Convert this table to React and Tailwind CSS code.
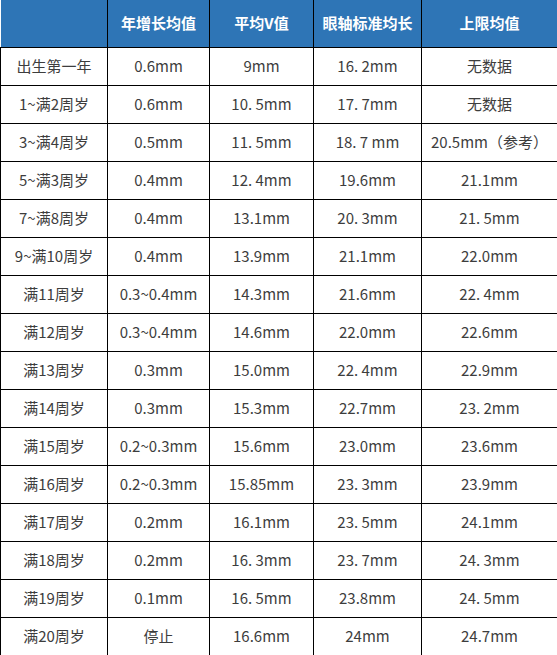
import React from "react";

const rows = [
  ["出生第一年", "0.6mm", "9mm", "16. 2mm", "无数据"],
  ["1~满2周岁", "0.6mm", "10. 5mm", "17. 7mm", "无数据"],
  ["3~满4周岁", "0.5mm", "11. 5mm", "18. 7 mm", "20.5mm（参考）"],
  ["5~满3周岁", "0.4mm", "12. 4mm", "19.6mm", "21.1mm"],
  ["7~满8周岁", "0.4mm", "13.1mm", "20. 3mm", "21. 5mm"],
  ["9~满10周岁", "0.4mm", "13.9mm", "21.1mm", "22.0mm"],
  ["满11周岁", "0.3~0.4mm", "14.3mm", "21.6mm", "22. 4mm"],
  ["满12周岁", "0.3~0.4mm", "14.6mm", "22.0mm", "22.6mm"],
  ["满13周岁", "0.3mm", "15.0mm", "22. 4mm", "22.9mm"],
  ["满14周岁", "0.3mm", "15.3mm", "22.7mm", "23. 2mm"],
  ["满15周岁", "0.2~0.3mm", "15.6mm", "23.0mm", "23.6mm"],
  ["满16周岁", "0.2~0.3mm", "15.85mm", "23. 3mm", "23.9mm"],
  ["满17周岁", "0.2mm", "16.1mm", "23. 5mm", "24.1mm"],
  ["满18周岁", "0.2mm", "16. 3mm", "23. 7mm", "24. 3mm"],
  ["满19周岁", "0.1mm", "16. 5mm", "23.8mm", "24. 5mm"],
  ["满20周岁", "停止", "16.6mm", "24mm", "24.7mm"],
];

const headers = ["", "年增长均值", "平均V值", "眼轴标准均长", "上限均值"];

const App = () => {
  return (
    <div className="w-[557px] h-[655px] bg-white font-['Noto_Sans_CJK_SC','Noto_Sans',sans-serif]">
      <table className="w-[557px] table-fixed border-collapse">
        <colgroup>
          <col className="w-[107px]" />
          <col className="w-[102px]" />
          <col className="w-[104px]" />
          <col className="w-[108px]" />
          <col className="w-[136px]" />
        </colgroup>
        <thead>
          <tr className="h-[47px] bg-[#2e75b6]">
            {headers.map((h, i) => (
              <th
                key={i}
                className="border-x border-b border-black first:border-l-0 p-0 text-[15px] font-bold text-white text-center"
              >
                {h}
              </th>
            ))}
          </tr>
        </thead>
        <tbody>
          {rows.map((r, i) => (
            <tr key={i} className="h-[38px]">
              {r.map((c, j) => (
                <td
                  key={j}
                  className="border border-black p-0 text-[15px] text-[#3d3d3d] text-center whitespace-nowrap"
                >
                  {c}
                </td>
              ))}
            </tr>
          ))}
        </tbody>
      </table>
    </div>
  );
};

export default App;
